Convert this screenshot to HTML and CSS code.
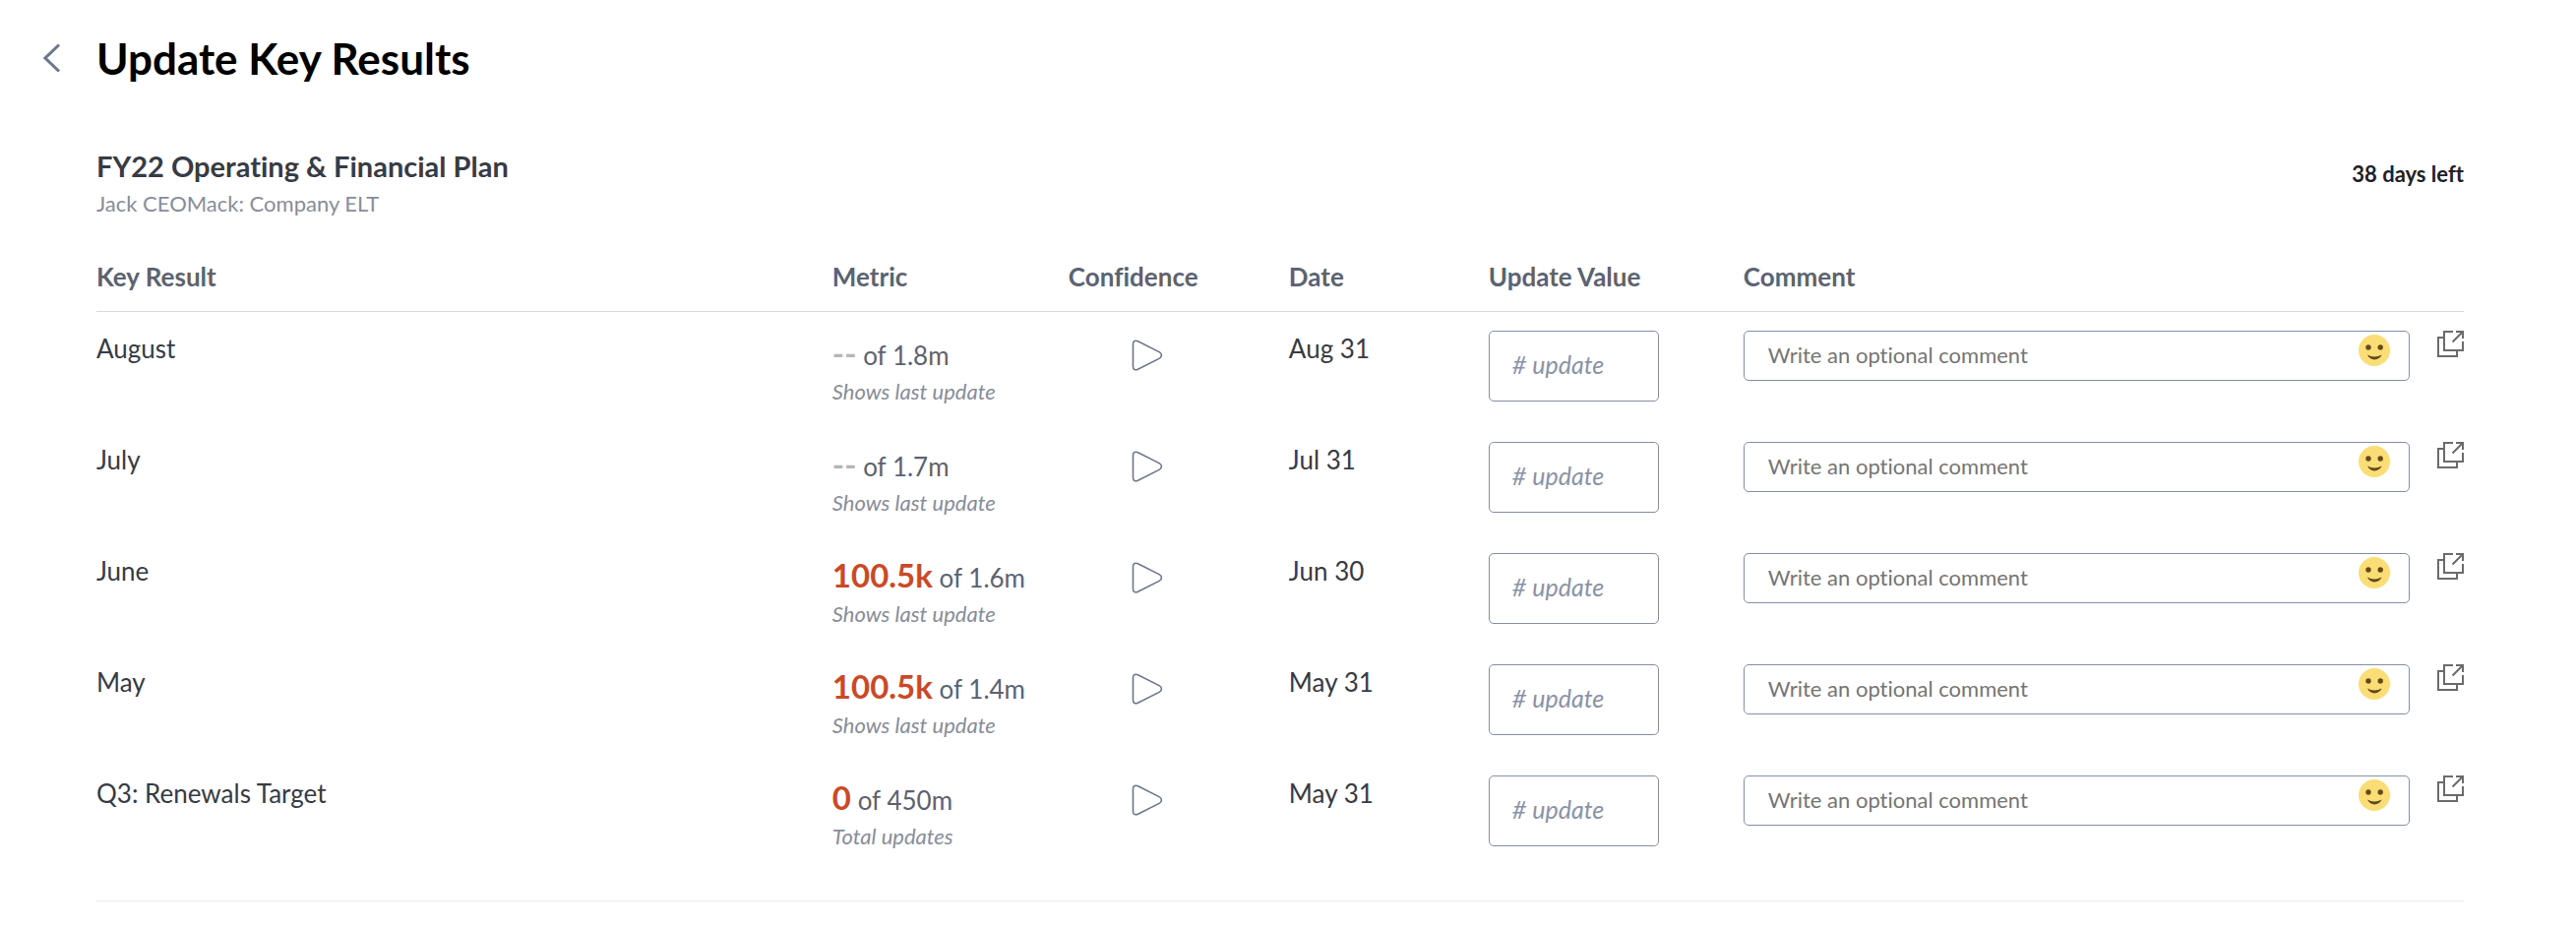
FILE: index.html
```html
<!DOCTYPE html>
<html lang="en">
<head>
    <meta charset="UTF-8">
    <meta name="viewport" content="width=device-width, initial-scale=1.0">
    <title>Update Key Results</title>
    <link rel="stylesheet" href="styles.css">
</head>
<body>
    <!-- shared icons -->
    <svg class="sprite" aria-hidden="true">
        <symbol id="icon-flag" viewBox="0 0 32 32">
            <path d="M1.500 4.500v23c0 3 2.500 4 5 2.800l22-11.200c2.600-1.600 2.600-4.600 0-6.200L6.500 1.700C4 .5 1.500 1.500 1.500 4.500z" fill="none" stroke="#6b778c" stroke-width="1.600"/>
        </symbol>
        <symbol id="icon-smile" viewBox="0 0 32 32">
            <circle cx="16" cy="16" r="16" fill="#fade75"/>
            <circle cx="10" cy="13" r="2.700" fill="#64491f"/>
            <circle cx="22.200" cy="13" r="2.700" fill="#64491f"/>
            <path d="M9 20.600q7 4 14.500 0c-1 2.800-4 4.900-7.300 4.900s-6-2-7.200-4.900z" fill="#64491f"/>
        </symbol>
        <symbol id="icon-open" viewBox="0 0 27 27">
            <path d="M16 1H7v19h19v-9M19 1h7v7M26 1L15.500 11.500M7 7H1v19h19v-6" fill="none" stroke="#6b6b6b" stroke-width="2"/>
        </symbol>
    </svg>

    <div class="header">
        <button class="back-button" aria-label="Back">
            <svg width="18" height="30" viewBox="0 0 18 30"><path d="M16 1.500L2 15l14 13.500" fill="none" stroke="#6b778c" stroke-width="3"/></svg>
        </button>
        <h1>Update Key Results</h1>
    </div>

    <div class="plan">
        <div class="plan-header">
            <div>
                <h2>FY22 Operating &amp; Financial Plan</h2>
                <p class="plan-owner">Jack CEOMack: Company ELT</p>
            </div>
            <div class="days-left">38 days left</div>
        </div>

        <table class="results">
            <thead>
                <tr>
                    <th class="col-name">Key Result</th>
                    <th class="col-metric">Metric</th>
                    <th class="col-confidence">Confidence</th>
                    <th class="col-date">Date</th>
                    <th class="col-value">Update Value</th>
                    <th>Comment</th>
                </tr>
            </thead>
            <tbody>
                <tr>
                    <td>August</td>
                    <td class="metric-cell">
                        <div class="metric"><strong class="empty">--</strong> of 1.8m</div>
                        <div class="metric-note">Shows last update</div>
                    </td>
                    <td><button class="flag-button" aria-label="Set confidence"><svg><use href="#icon-flag"/></svg></button></td>
                    <td>Aug 31</td>
                    <td><input class="value-input" type="text" placeholder="# update" aria-label="August value"></td>
                    <td>
                        <div class="comment-cell">
                            <div class="comment-box">
                                <input class="comment-input" type="text" placeholder="Write an optional comment" aria-label="August comment">
                                <button class="emoji-button" aria-label="Add emoji"><svg><use href="#icon-smile"/></svg></button>
                            </div>
                            <a class="open-link" href="#" aria-label="Open August"><svg><use href="#icon-open"/></svg></a>
                        </div>
                    </td>
                </tr>
                <tr>
                    <td>July</td>
                    <td class="metric-cell">
                        <div class="metric"><strong class="empty">--</strong> of 1.7m</div>
                        <div class="metric-note">Shows last update</div>
                    </td>
                    <td><button class="flag-button" aria-label="Set confidence"><svg><use href="#icon-flag"/></svg></button></td>
                    <td>Jul 31</td>
                    <td><input class="value-input" type="text" placeholder="# update" aria-label="July value"></td>
                    <td>
                        <div class="comment-cell">
                            <div class="comment-box">
                                <input class="comment-input" type="text" placeholder="Write an optional comment" aria-label="July comment">
                                <button class="emoji-button" aria-label="Add emoji"><svg><use href="#icon-smile"/></svg></button>
                            </div>
                            <a class="open-link" href="#" aria-label="Open July"><svg><use href="#icon-open"/></svg></a>
                        </div>
                    </td>
                </tr>
                <tr>
                    <td>June</td>
                    <td class="metric-cell">
                        <div class="metric"><strong>100.5k</strong> of 1.6m</div>
                        <div class="metric-note">Shows last update</div>
                    </td>
                    <td><button class="flag-button" aria-label="Set confidence"><svg><use href="#icon-flag"/></svg></button></td>
                    <td>Jun 30</td>
                    <td><input class="value-input" type="text" placeholder="# update" aria-label="June value"></td>
                    <td>
                        <div class="comment-cell">
                            <div class="comment-box">
                                <input class="comment-input" type="text" placeholder="Write an optional comment" aria-label="June comment">
                                <button class="emoji-button" aria-label="Add emoji"><svg><use href="#icon-smile"/></svg></button>
                            </div>
                            <a class="open-link" href="#" aria-label="Open June"><svg><use href="#icon-open"/></svg></a>
                        </div>
                    </td>
                </tr>
                <tr>
                    <td>May</td>
                    <td class="metric-cell">
                        <div class="metric"><strong>100.5k</strong> of 1.4m</div>
                        <div class="metric-note">Shows last update</div>
                    </td>
                    <td><button class="flag-button" aria-label="Set confidence"><svg><use href="#icon-flag"/></svg></button></td>
                    <td>May 31</td>
                    <td><input class="value-input" type="text" placeholder="# update" aria-label="May value"></td>
                    <td>
                        <div class="comment-cell">
                            <div class="comment-box">
                                <input class="comment-input" type="text" placeholder="Write an optional comment" aria-label="May comment">
                                <button class="emoji-button" aria-label="Add emoji"><svg><use href="#icon-smile"/></svg></button>
                            </div>
                            <a class="open-link" href="#" aria-label="Open May"><svg><use href="#icon-open"/></svg></a>
                        </div>
                    </td>
                </tr>
                <tr>
                    <td>Q3: Renewals Target</td>
                    <td class="metric-cell">
                        <div class="metric"><strong>0</strong> of 450m</div>
                        <div class="metric-note">Total updates</div>
                    </td>
                    <td><button class="flag-button" aria-label="Set confidence"><svg><use href="#icon-flag"/></svg></button></td>
                    <td>May 31</td>
                    <td><input class="value-input" type="text" placeholder="# update" aria-label="Q3: Renewals Target value"></td>
                    <td>
                        <div class="comment-cell">
                            <div class="comment-box">
                                <input class="comment-input" type="text" placeholder="Write an optional comment" aria-label="Q3: Renewals Target comment">
                                <button class="emoji-button" aria-label="Add emoji"><svg><use href="#icon-smile"/></svg></button>
                            </div>
                            <a class="open-link" href="#" aria-label="Open Q3: Renewals Target"><svg><use href="#icon-open"/></svg></a>
                        </div>
                    </td>
                </tr>
            </tbody>
        </table>
    </div>
</body>
</html>
```
FILE: styles.css
```css
* {
    box-sizing: border-box;
}

body {
    margin: 0;
    padding: 33px 114px 28px 98px;
    background-color: #fff;
    font-family: Lato, sans-serif;
    font-size: 26px;
    line-height: 36px;
    font-variant-ligatures: none;
    color: #363b45;
}

h1,
h2,
p {
    margin: 0;
}

button {
    padding: 0;
    border: none;
    background-color: transparent;
    cursor: pointer;
}

svg {
    display: block;
}

.sprite {
    position: absolute;
    width: 0;
    height: 0;
}

.header {
    display: flex;
    align-items: center;
    margin-left: -54px;
    margin-bottom: 66px;
}

.back-button {
    width: 54px;
}

.header h1 {
    font-size: 44px;
    line-height: 52px;
    color: #000;
}

.plan {
    padding-bottom: 33px;
    border-bottom: 1px solid #ebecee;
}

.plan-header {
    display: flex;
    justify-content: space-between;
    align-items: flex-start;
    margin-bottom: 42px;
}

.plan-header h2 {
    font-size: 29px;
    line-height: 36px;
    margin-bottom: 6px;
}

.plan-owner {
    font-size: 22px;
    line-height: 28px;
    color: #878d9a;
}

.days-left {
    padding-top: 12px;
    font-size: 22px;
    line-height: 28px;
    font-weight: bold;
    color: #1d2129;
}

.results {
    width: 100%;
    table-layout: fixed;
    border-collapse: separate;
    border-spacing: 0;
}

.results th {
    padding: 0 0 17px;
    border-bottom: 1px solid #d5d9e0;
    text-align: left;
    color: #5b6373;
}

.results td {
    height: 113px;
    padding: 19px 0 0;
    vertical-align: top;
}

.col-name {
    width: 31%;
}

.col-metric {
    width: 242px;
}

.col-confidence {
    width: 224px;
}

.col-date {
    width: 203px;
}

.col-value {
    width: 259px;
}

.results .col-metric,
.results .metric-cell {
    padding-left: 2px;
}

.metric {
    line-height: 44px;
    color: #5b6373;
}

.metric strong {
    font-size: 33px;
    color: #cc4928;
}

.metric .empty {
    color: #b5b5b5;
}

.metric-note {
    font-size: 22px;
    line-height: 30px;
    font-style: italic;
    color: #878d9a;
}

.flag-button {
    display: block;
    margin: 9px 0 0 64px;
}

.flag-button svg {
    width: 32px;
    height: 32px;
}

input {
    display: block;
    border: 1px solid #838fa5;
    border-radius: 5px;
    background-color: #fff;
    font-family: inherit;
    font-variant-ligatures: none;
    color: #363b45;
}

.value-input {
    width: 173px;
    height: 72px;
    padding: 0 23px 4px;
    font-size: 25px;
}

.value-input::placeholder {
    font-style: italic;
    color: #8993a8;
}

.comment-cell {
    display: flex;
    align-items: flex-start;
    gap: 28px;
}

.comment-box {
    position: relative;
    flex: 1;
}

.comment-input {
    width: 100%;
    height: 51px;
    padding: 0 60px 2px 24px;
    font-size: 22px;
}

.comment-input::placeholder {
    color: #757575;
}

/* sits on top of the comment box */
.emoji-button {
    position: absolute;
    top: 4px;
    right: 20px;
}

.emoji-button svg {
    width: 32px;
    height: 32px;
}

.open-link svg {
    width: 27px;
    height: 27px;
}
```
